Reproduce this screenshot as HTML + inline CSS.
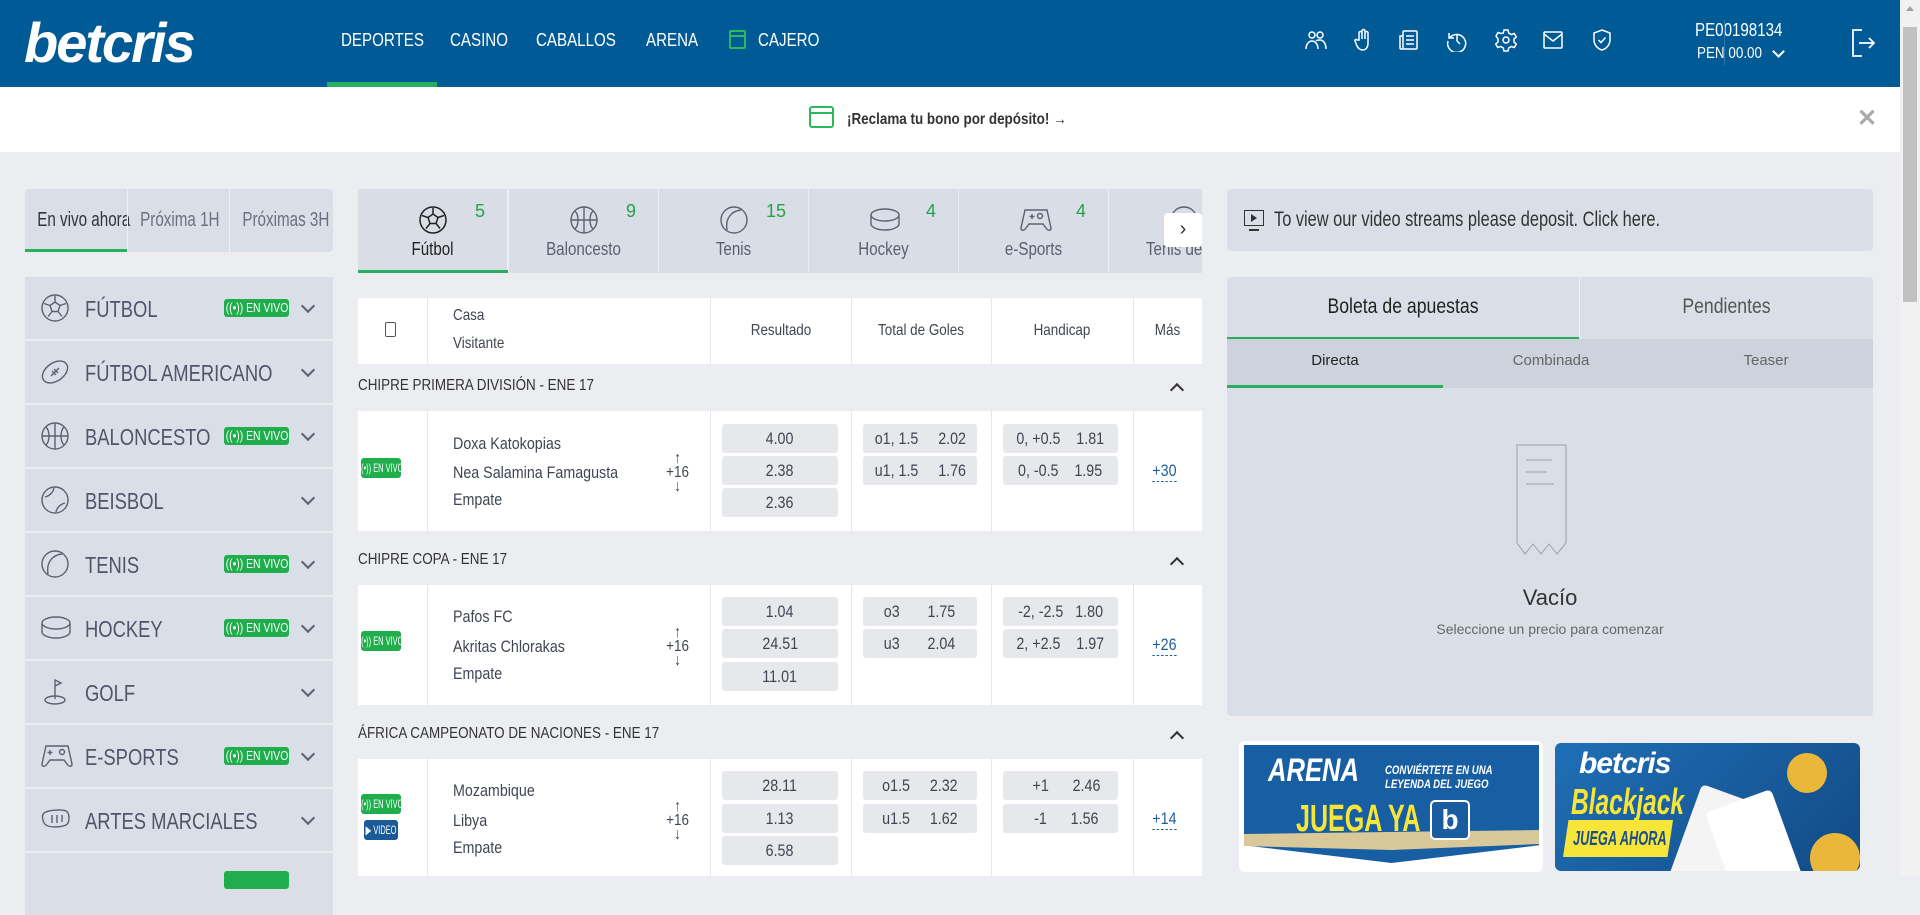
<!DOCTYPE html>
<html><head><meta charset="utf-8">
<style>
*{box-sizing:border-box;margin:0;padding:0}
body{width:1920px;height:876px;overflow:hidden;background:#ebedf0;font-family:"Liberation Sans",sans-serif;color:#3f4652;position:relative}
.a{position:absolute;white-space:nowrap}
.c{transform:scaleX(.84);transform-origin:0 50%}
.cc{transform:scaleX(.84);transform-origin:50% 50%}
.hdr{left:0;top:0;width:1900px;height:87px;background:#005a96}
.logo{left:24px;top:10px;color:#fff;font:italic bold 56px "Liberation Sans",sans-serif;letter-spacing:-2px}
.nav{top:30px;color:#fff;font-size:18px}
.ico{top:28px;width:24px;height:24px}
.sb{left:1900px;top:0;width:20px;height:876px;background:#f1f1f1}
.promo{left:0;top:87px;width:1900px;height:65px;background:#fff}
.panel{background:#dadfe7}
.tabL{top:189px;height:63px;font-size:20px;line-height:63px;text-align:center;color:#6a7080;transform:scaleX(.76);transform-origin:50% 50%}
.row{left:25px;width:308px;height:62px;background:#dadfe7}
.row .n{position:absolute;left:60px;top:0;line-height:64px;font-size:23px;color:#4e5566;transform:scaleX(.8);transform-origin:0 50%;white-space:nowrap}
.row svg.si{position:absolute;left:15px;top:16px}
.live{position:absolute;background:#1fae4b;color:#fff;font-size:13px;border-radius:3px;height:18px;line-height:18px;white-space:nowrap;overflow:hidden}
.live span{position:absolute;left:50%;top:0;transform:translateX(-50%) scaleX(.8)}
.row .live{left:199px;top:22px;width:65px}
.sm span{transform:translateX(-50%) scaleX(.62);font-size:12px}
.chev{position:absolute;left:278px;top:24px;width:10px;height:10px;border-right:2px solid #5a6170;border-bottom:2px solid #5a6170;transform:rotate(45deg)}
.st{top:189px;width:149px;height:84px;background:#d9dee6;text-align:center;overflow:hidden}
.st .l{position:absolute;left:0;right:0;top:50px;font-size:18px;color:#596070;transform:scaleX(.84);white-space:nowrap}
.st .c2{position:absolute;right:22px;top:12px;font-size:18px;color:#25a24a}
.st svg{position:absolute;left:60px;top:16px}
.wh{background:#fff}
.lg{left:358px;font-size:16px;color:#333;transform:scaleX(.84);transform-origin:0 50%}
.caret{left:1172px;width:10px;height:10px;border-left:2px solid #333;border-top:2px solid #333;transform:rotate(45deg)}
.vl{width:1px;background:#e3e6ea}
.ob{background:#e6e8ec;border-radius:3px;font-size:17px;color:#3f4652;height:29px;line-height:29px;text-align:center}
.ob span{display:inline-block;transform:scaleX(.84);white-space:pre}
.tm{left:453px;font-size:17px;color:#3f4652;transform:scaleX(.84);transform-origin:0 50%}
.mas{font-size:17px;color:#1f5e9c;border-bottom:1px dashed #1f5e9c;line-height:20px;transform:scaleX(.84)}
.hs{font-size:16px;transform:scaleX(.84)}
</style></head><body>
<div class="a hdr"></div>
<div class="a logo">betcris</div>
<div class="a nav c" style="left:341px">DEPORTES</div>
<div class="a nav c" style="left:450px">CASINO</div>
<div class="a nav c" style="left:536px">CABALLOS</div>
<div class="a nav c" style="left:646px">ARENA</div>
<div class="a" style="left:729px;top:30px;width:17px;height:19px;border:2px solid #2db85a;border-radius:2px"><div class="a" style="left:0;top:3px;width:13px;height:2px;background:#2db85a"></div></div>
<div class="a nav c" style="left:758px">CAJERO</div>
<div class="a" style="left:327px;top:82px;width:110px;height:5px;background:#27ae60"></div>
<svg class="a ico" style="left:1304px" viewBox="0 0 24 24" fill="none" stroke="#fff" stroke-width="1.5"><circle cx="8" cy="7" r="3"/><circle cx="16" cy="7" r="3"/><path d="M2 21c0-5 3-8 6-8s6 3 6 8M12 13c1-1 2-1 4-1 3 0 6 3 6 9"/></svg>
<svg class="a ico" style="left:1351px" viewBox="0 0 24 24" fill="none" stroke="#fff" stroke-width="1.5"><path d="M8 12V5a1.5 1.5 0 013 0v6V3a1.5 1.5 0 013 0v8V5a1.5 1.5 0 013 0v10c0 4-2 7-5 7s-5-2-6-4l-2-5c-.5-1.5 1.5-2 2-1z"/></svg>
<svg class="a ico" style="left:1397px" viewBox="0 0 24 24" fill="none" stroke="#fff" stroke-width="1.5"><rect x="6" y="3" width="14" height="18" rx="1"/><path d="M6 8H3v12a1 1 0 001 1h2M9 8h8M9 12h8M9 16h8"/></svg>
<svg class="a ico" style="left:1445px" viewBox="0 0 24 24" fill="none" stroke="#fff" stroke-width="1.5"><path d="M4 5v5h5"/><path d="M4.5 10A9 9 0 113 13"/><path d="M12 7v6l3 3"/></svg>
<svg class="a ico" style="left:1494px" viewBox="0 0 24 24" fill="none" stroke="#fff" stroke-width="1.5"><circle cx="12" cy="12" r="3"/><path d="M10 2h4l.7 3 2.6 1.5 3-1 2 3.5-2.3 2v3l2.3 2-2 3.5-3-1-2.6 1.5-.7 3h-4l-.7-3-2.6-1.5-3 1-2-3.5 2.3-2v-3L2 8l2-3.5 3 1L9.3 5z"/></svg>
<svg class="a ico" style="left:1541px" viewBox="0 0 24 24" fill="none" stroke="#fff" stroke-width="1.5"><rect x="3" y="4" width="18" height="16" rx="1"/><path d="M3 6l9 7 9-7"/></svg>
<svg class="a ico" style="left:1590px" viewBox="0 0 24 24" fill="none" stroke="#fff" stroke-width="1.5"><path d="M12 2l8 3v7c0 5-4 9-8 10-4-1-8-5-8-10V5z"/><path d="M8.5 12l2.5 2.5 4.5-5"/></svg>
<div class="a c" style="left:1695px;top:20px;color:#fff;font-size:18px">PE00198134</div>
<div class="a c" style="left:1697px;top:45px;color:#fff;font-size:16px">PEN 00.00</div>
<div class="a" style="left:1774px;top:47px;width:9px;height:9px;border-right:2px solid #fff;border-bottom:2px solid #fff;transform:rotate(45deg)"></div>
<div class="a" style="left:1724px;top:20px;width:1px;height:45px;background:#2e78ad"></div>
<svg class="a" style="left:1850px;top:28px" width="26" height="30" viewBox="0 0 26 30" fill="none" stroke="#fff" stroke-width="1.8"><path d="M12 2H3v26h9M9 15h15M19 10l5 5-5 5"/></svg>
<div class="a sb"><div class="a" style="left:3px;top:27px;width:14px;height:275px;background:#c1c1c1"></div><div class="a" style="left:6px;top:6px;border:4px solid transparent;border-bottom:5px solid #a0a0a0;border-top:0"></div></div>
<div class="a promo"></div>
<div class="a" style="left:809px;top:106px;width:25px;height:22px;border:2px solid #2db85a;border-radius:3px"><div class="a" style="left:0;top:4px;width:21px;height:2px;background:#2db85a"></div></div>
<div class="a c" style="left:847px;top:111px;font-size:16px;font-weight:bold;color:#333">¡Reclama tu bono por depósito! →</div>
<div class="a" style="left:1857px;top:104px;font-size:24px;font-weight:bold;color:#aaa">✕</div>

<div class="a panel" style="left:25px;top:189px;width:308px;height:63px;border-radius:4px"></div>
<div class="a tabL" style="left:25px;width:102px;color:#2f3440">En vivo ahora</div>
<div class="a" style="left:25px;top:249px;width:102px;height:3px;background:#27ae60"></div>
<div class="a" style="left:127px;top:189px;width:1px;height:63px;background:#eef0f3"></div>
<div class="a tabL" style="left:128px;width:101px">Próxima 1H</div>
<div class="a" style="left:229px;top:189px;width:1px;height:63px;background:#eef0f3"></div>
<div class="a tabL" style="left:230px;width:103px">Próximas 3H</div>

<div class="a row" style="top:277px"><svg class="si" width="30" height="30" viewBox="0 0 30 30" fill="none" stroke="#5a6170" stroke-width="1.4"><circle cx="15" cy="15" r="13"/><path d="M15 9l5 3.5-2 6h-6l-2-6zM15 9V3M20 12.5l6-2M18 18.5l4 5M12 18.5l-4 5M10 12.5l-6-2"/></svg><div class="n">FÚTBOL</div><div class="live"><span>((•)) EN VIVO</span></div><div class="chev"></div></div>
<div class="a row" style="top:341px"><svg class="si" width="30" height="30" viewBox="0 0 30 30" fill="none" stroke="#5a6170" stroke-width="1.4"><ellipse cx="15" cy="15" rx="14" ry="9" transform="rotate(-35 15 15)"/><path d="M11 19l8-8M12 14l4 4M14 12l4 4"/></svg><div class="n">FÚTBOL AMERICANO</div><div class="chev"></div></div>
<div class="a row" style="top:405px"><svg class="si" width="30" height="30" viewBox="0 0 30 30" fill="none" stroke="#5a6170" stroke-width="1.4"><circle cx="15" cy="15" r="13"/><path d="M2 15h26M15 2v26M6 6c4 4 4 14 0 18M24 6c-4 4-4 14 0 18"/></svg><div class="n">BALONCESTO</div><div class="live"><span>((•)) EN VIVO</span></div><div class="chev"></div></div>
<div class="a row" style="top:469px"><svg class="si" width="30" height="30" viewBox="0 0 30 30" fill="none" stroke="#5a6170" stroke-width="1.4"><circle cx="15" cy="15" r="13"/><path d="M5 12c4-1 8-4 9-9M16 27c1-5 5-8 9-9"/></svg><div class="n">BEISBOL</div><div class="chev"></div></div>
<div class="a row" style="top:533px"><svg class="si" width="30" height="30" viewBox="0 0 30 30" fill="none" stroke="#5a6170" stroke-width="1.4"><circle cx="15" cy="15" r="13"/><path d="M22 5C12 6 6 14 8 25"/></svg><div class="n">TENIS</div><div class="live"><span>((•)) EN VIVO</span></div><div class="chev"></div></div>
<div class="a row" style="top:597px"><svg class="si" width="32" height="30" viewBox="0 0 32 30" fill="none" stroke="#5a6170" stroke-width="1.4"><ellipse cx="16" cy="10" rx="14" ry="6"/><path d="M2 10v9c0 3 6 6 14 6s14-3 14-6v-9"/></svg><div class="n">HOCKEY</div><div class="live"><span>((•)) EN VIVO</span></div><div class="chev"></div></div>
<div class="a row" style="top:661px"><svg class="si" width="30" height="30" viewBox="0 0 30 30" fill="none" stroke="#5a6170" stroke-width="1.4"><path d="M15 22V3l6 3-6 3"/><ellipse cx="15" cy="23" rx="10" ry="4"/></svg><div class="n">GOLF</div><div class="chev"></div></div>
<div class="a row" style="top:725px"><svg class="si" width="34" height="30" viewBox="0 0 34 30" fill="none" stroke="#5a6170" stroke-width="1.4"><path d="M6 5h22l4 18c0 3-3 3-5 0l-3-4H10l-3 4c-2 3-5 3-5 0z"/><path d="M10 9v5M7.5 11.5h5"/><circle cx="22" cy="11" r="2.5"/></svg><div class="n">E-SPORTS</div><div class="live"><span>((•)) EN VIVO</span></div><div class="chev"></div></div>
<div class="a row" style="top:789px"><svg class="si" width="32" height="30" viewBox="0 0 32 30" fill="none" stroke="#5a6170" stroke-width="1.4"><path d="M4 8c4-3 18-4 22-2 4 2 4 12 0 14-4 2-16 3-20 0-3-2-5-9-2-12zM12 10v8M17 10v8M22 10v7"/></svg><div class="n">ARTES MARCIALES</div><div class="chev"></div></div>
<div class="a row" style="top:853px"><div class="live" style="left:199px;top:18px;width:65px"></div></div>

<div class="a st" style="left:358px"><svg width="30" height="30" viewBox="0 0 30 30" fill="none" stroke="#222" stroke-width="1.5"><circle cx="15" cy="15" r="13"/><path d="M15 9l5 3.5-2 6h-6l-2-6zM15 9V3M20 12.5l6-2M18 18.5l4 5M12 18.5l-4 5M10 12.5l-6-2"/></svg><div class="c2">5</div><div class="l" style="color:#222">Fútbol</div></div>
<div class="a" style="left:358px;top:270px;width:150px;height:3px;background:#27ae60"></div>
<div class="a st" style="left:509px"><svg width="30" height="30" viewBox="0 0 30 30" fill="none" stroke="#5a6170" stroke-width="1.4"><circle cx="15" cy="15" r="13"/><path d="M2 15h26M15 2v26M6 6c4 4 4 14 0 18M24 6c-4 4-4 14 0 18"/></svg><div class="c2">9</div><div class="l">Baloncesto</div></div>
<div class="a st" style="left:659px"><svg width="30" height="30" viewBox="0 0 30 30" fill="none" stroke="#5a6170" stroke-width="1.4"><circle cx="15" cy="15" r="13"/><path d="M22 5C12 6 6 14 8 25"/></svg><div class="c2">15</div><div class="l">Tenis</div></div>
<div class="a st" style="left:809px"><svg width="32" height="30" viewBox="0 0 32 30" fill="none" stroke="#5a6170" stroke-width="1.4"><ellipse cx="16" cy="10" rx="14" ry="6"/><path d="M2 10v9c0 3 6 6 14 6s14-3 14-6v-9"/></svg><div class="c2">4</div><div class="l">Hockey</div></div>
<div class="a st" style="left:959px"><svg width="34" height="30" viewBox="0 0 34 30" fill="none" stroke="#5a6170" stroke-width="1.4"><path d="M6 5h22l4 18c0 3-3 3-5 0l-3-4H10l-3 4c-2 3-5 3-5 0z"/><path d="M13 9v5M10.5 11.5h5"/><circle cx="21" cy="11" r="2.5"/></svg><div class="c2">4</div><div class="l">e-Sports</div></div>
<div class="a st" style="left:1109px;width:93px"><svg style="left:60px" width="30" height="30" viewBox="0 0 30 30" fill="none" stroke="#5a6170" stroke-width="1.4"><circle cx="15" cy="15" r="13"/></svg><div class="l" style="left:37px;text-align:left;transform-origin:0 50%">Tenis de</div></div>
<div class="a" style="left:1164px;top:213px;width:38px;height:34px;background:#fff;border-radius:4px;text-align:center;line-height:32px;font-size:20px;color:#333">›</div>

<div class="a wh" style="left:358px;top:298px;width:844px;height:66px"></div>
<div class="a" style="left:385px;top:322px;width:11px;height:15px;border:1.5px solid #555;border-radius:2px"></div>
<div class="a hs" style="left:453px;top:307px;transform-origin:0 50%">Casa</div>
<div class="a hs" style="left:453px;top:335px;transform-origin:0 50%">Visitante</div>
<div class="a hs" style="left:711px;top:322px;width:140px;text-align:center">Resultado</div>
<div class="a hs" style="left:851px;top:322px;width:140px;text-align:center">Total de Goles</div>
<div class="a hs" style="left:991px;top:322px;width:142px;text-align:center">Handicap</div>
<div class="a hs" style="left:1133px;top:322px;width:69px;text-align:center">Más</div>

<div class="a lg" style="top:377px">CHIPRE PRIMERA DIVISIÓN - ENE 17</div>
<div class="a caret" style="top:385px"></div>
<div class="a lg" style="top:551px">CHIPRE COPA - ENE 17</div>
<div class="a caret" style="top:559px"></div>
<div class="a lg" style="top:725px">ÁFRICA CAMPEONATO DE NACIONES - ENE 17</div>
<div class="a caret" style="top:733px"></div>

<div class="a wh" style="left:358px;top:411px;width:844px;height:120px"></div>
<div class="a wh" style="left:358px;top:585px;width:844px;height:120px"></div>
<div class="a wh" style="left:358px;top:759px;width:844px;height:117px"></div>
<div class="a vl" style="left:427px;top:298px;height:66px"></div><div class="a vl" style="left:710px;top:298px;height:66px"></div><div class="a vl" style="left:851px;top:298px;height:66px"></div><div class="a vl" style="left:991px;top:298px;height:66px"></div><div class="a vl" style="left:1133px;top:298px;height:66px"></div>
<div class="a vl" style="left:427px;top:411px;height:120px"></div><div class="a vl" style="left:710px;top:411px;height:120px"></div><div class="a vl" style="left:851px;top:411px;height:120px"></div><div class="a vl" style="left:991px;top:411px;height:120px"></div><div class="a vl" style="left:1133px;top:411px;height:120px"></div>
<div class="a vl" style="left:427px;top:585px;height:120px"></div><div class="a vl" style="left:710px;top:585px;height:120px"></div><div class="a vl" style="left:851px;top:585px;height:120px"></div><div class="a vl" style="left:991px;top:585px;height:120px"></div><div class="a vl" style="left:1133px;top:585px;height:120px"></div>
<div class="a vl" style="left:427px;top:759px;height:117px"></div><div class="a vl" style="left:710px;top:759px;height:117px"></div><div class="a vl" style="left:851px;top:759px;height:117px"></div><div class="a vl" style="left:991px;top:759px;height:117px"></div><div class="a vl" style="left:1133px;top:759px;height:117px"></div>

<div class="live sm" style="left:361px;top:458px;width:40px;height:20px;line-height:20px"><span>((•)) EN VIVO</span></div>
<div class="a tm" style="top:434px">Doxa Katokopias</div>
<div class="a tm" style="top:463px">Nea Salamina Famagusta</div>
<div class="a tm" style="top:490px">Empate</div>
<div class="a" style="left:664px;top:452px;font-size:16px;line-height:14px;text-align:center;transform:scaleX(.84)">↑<br>+16<br>↓</div>
<div class="a ob" style="left:722px;top:424px;width:116px"><span>4.00</span></div>
<div class="a ob" style="left:722px;top:456px;width:116px"><span>2.38</span></div>
<div class="a ob" style="left:722px;top:488px;width:116px"><span>2.36</span></div>
<div class="a ob" style="left:863px;top:424px;width:114px"><span>o1, 1.5     2.02</span></div>
<div class="a ob" style="left:863px;top:456px;width:114px"><span>u1, 1.5     1.76</span></div>
<div class="a ob" style="left:1003px;top:424px;width:115px"><span>0, +0.5    1.81</span></div>
<div class="a ob" style="left:1003px;top:456px;width:115px"><span>0, -0.5    1.95</span></div>
<div class="a mas" style="left:1150px;top:461px">+30</div>

<div class="live sm" style="left:361px;top:631px;width:40px;height:20px;line-height:20px"><span>((•)) EN VIVO</span></div>
<div class="a tm" style="top:607px">Pafos FC</div>
<div class="a tm" style="top:637px">Akritas Chlorakas</div>
<div class="a tm" style="top:664px">Empate</div>
<div class="a" style="left:664px;top:626px;font-size:16px;line-height:14px;text-align:center;transform:scaleX(.84)">↑<br>+16<br>↓</div>
<div class="a ob" style="left:722px;top:597px;width:116px"><span>1.04</span></div>
<div class="a ob" style="left:722px;top:629px;width:116px"><span>24.51</span></div>
<div class="a ob" style="left:722px;top:662px;width:116px"><span>11.01</span></div>
<div class="a ob" style="left:863px;top:597px;width:114px"><span>o3       1.75</span></div>
<div class="a ob" style="left:863px;top:629px;width:114px"><span>u3       2.04</span></div>
<div class="a ob" style="left:1003px;top:597px;width:115px"><span>-2, -2.5   1.80</span></div>
<div class="a ob" style="left:1003px;top:629px;width:115px"><span>2, +2.5    1.97</span></div>
<div class="a mas" style="left:1150px;top:635px">+26</div>

<div class="live sm" style="left:361px;top:794px;width:40px;height:20px;line-height:20px"><span>((•)) EN VIVO</span></div>
<div class="live sm" style="left:364px;top:820px;width:34px;height:20px;line-height:20px;background:#1a5a96"><span>▶ VIDEO</span></div>
<div class="a tm" style="top:781px">Mozambique</div>
<div class="a tm" style="top:811px">Libya</div>
<div class="a tm" style="top:838px">Empate</div>
<div class="a" style="left:664px;top:800px;font-size:16px;line-height:14px;text-align:center;transform:scaleX(.84)">↑<br>+16<br>↓</div>
<div class="a ob" style="left:722px;top:771px;width:116px"><span>28.11</span></div>
<div class="a ob" style="left:722px;top:804px;width:116px"><span>1.13</span></div>
<div class="a ob" style="left:722px;top:836px;width:116px"><span>6.58</span></div>
<div class="a ob" style="left:863px;top:771px;width:114px"><span>o1.5     2.32</span></div>
<div class="a ob" style="left:863px;top:804px;width:114px"><span>u1.5     1.62</span></div>
<div class="a ob" style="left:1003px;top:771px;width:115px"><span>   +1      2.46</span></div>
<div class="a ob" style="left:1003px;top:804px;width:115px"><span>   -1      1.56</span></div>
<div class="a mas" style="left:1150px;top:809px">+14</div>

<div class="a panel" style="left:1227px;top:189px;width:646px;height:62px;border-radius:4px"></div>
<div class="a" style="left:1244px;top:210px;width:20px;height:16px;border:1.5px solid #333"><div class="a" style="left:6px;top:3px;border-left:6px solid #333;border-top:4px solid transparent;border-bottom:4px solid transparent;width:0;height:0"></div></div>
<div class="a" style="left:1249px;top:229px;width:10px;height:2px;background:#333"></div>
<div class="a c" style="left:1274px;top:208px;font-size:21px;color:#333;transform:scaleX(.78)">To view our video streams please deposit. Click here.</div>

<div class="a panel" style="left:1227px;top:277px;width:646px;height:439px;border-radius:4px"></div>
<div class="a cc" style="left:1227px;top:277px;width:352px;height:61px;text-align:center;line-height:60px;font-size:21px;color:#222">Boleta de apuestas</div>
<div class="a" style="left:1579px;top:277px;width:1px;height:61px;background:#eef0f3"></div>
<div class="a cc" style="left:1580px;top:277px;width:293px;height:61px;text-align:center;line-height:60px;font-size:21px;color:#555">Pendientes</div>
<div class="a" style="left:1227px;top:337px;width:352px;height:2px;background:#27ae60"></div>
<div class="a" style="left:1227px;top:339px;width:646px;height:49px;background:#cdd2dc"></div>
<div class="a" style="left:1227px;top:352px;width:216px;text-align:center;font-size:15px;color:#222">Directa</div>
<div class="a" style="left:1443px;top:352px;width:216px;text-align:center;font-size:15px;color:#666">Combinada</div>
<div class="a" style="left:1659px;top:352px;width:214px;text-align:center;font-size:15px;color:#666">Teaser</div>
<div class="a" style="left:1227px;top:385px;width:216px;height:3px;background:#27ae60"></div>
<svg class="a" style="left:1515px;top:444px" width="54" height="124" viewBox="0 0 54 124" fill="none" stroke="#9aa0a8" stroke-width="1"><path d="M2 1h49v98l-9 11-8-10-8 10-8-10-8 10-8-11z"/><path d="M11 16h26M11 28h21M11 40h28"/></svg>
<div class="a" style="left:1227px;top:585px;width:646px;text-align:center;font-size:22px;color:#333">Vacío</div>
<div class="a" style="left:1227px;top:621px;width:646px;text-align:center;font-size:14px;color:#666">Seleccione un precio para comenzar</div>

<div class="a" style="left:1239px;top:741px;width:304px;height:131px;background:#fff;border-radius:6px"></div>
<div class="a" style="left:1244px;top:745px;width:295px;height:118px;background:#175ea3;clip-path:polygon(0 0,100% 0,100% 85%,50% 100%,0 85%)"></div>
<div class="a" style="left:1244px;top:830px;width:295px;height:20px;background:#d8c89a;clip-path:polygon(0 20%,100% 0,100% 70%,50% 100%,0 80%)"></div>
<div class="a c" style="left:1268px;top:752px;color:#fff;font:italic bold 32px 'Liberation Sans',sans-serif;transform:scaleX(.8)">ARENA</div>
<div class="a c" style="left:1385px;top:763px;color:#fff;font:italic bold 12px 'Liberation Sans',sans-serif;line-height:14px;transform:scaleX(.8)">CONVIÉRTETE EN UNA<br>LEYENDA DEL JUEGO</div>
<div class="a c" style="left:1296px;top:798px;color:#f7e53a;font:bold 38px 'Liberation Sans',sans-serif;transform:scaleX(.66)">JUEGA YA</div>
<div class="a" style="left:1430px;top:800px;width:40px;height:40px;background:#1a5ca0;border:2px solid #fff;border-radius:5px;color:#fff;font:bold 28px sans-serif;text-align:center;line-height:36px">b</div>
<div class="a" style="left:1555px;top:743px;width:305px;height:128px;background:linear-gradient(135deg,#1f6fb6,#124a85);border-radius:6px;overflow:hidden">
 <div class="a" style="left:24px;top:4px;color:#fff;font:bold italic 30px 'Liberation Sans',sans-serif;letter-spacing:-1px">betcris</div>
 <div class="a c" style="left:16px;top:38px;color:#f7e53a;font:bold italic 36px 'Liberation Sans',sans-serif;transform:scaleX(.68)">Blackjack</div>
 <div class="a" style="left:8px;top:77px;width:110px;height:37px;background:#f7e53a;clip-path:polygon(5% 0,100% 0,95% 100%,0 100%)"></div>
 <div class="a c" style="left:18px;top:85px;color:#1a4d8a;font:bold italic 20px 'Liberation Sans',sans-serif;transform:scaleX(.64)">JUEGA AHORA</div>
 <div class="a" style="left:128px;top:50px;width:70px;height:100px;background:#f4f4f4;transform:rotate(20deg);border-radius:5px"></div>
 <div class="a" style="left:165px;top:55px;width:70px;height:100px;background:#fff;transform:rotate(-20deg);border-radius:5px"></div>
 <div class="a" style="left:232px;top:10px;width:40px;height:40px;background:#e9b73a;border-radius:50%"></div>
 <div class="a" style="left:255px;top:90px;width:50px;height:50px;background:#e9b73a;border-radius:50%"></div>
</div>
</body></html>
